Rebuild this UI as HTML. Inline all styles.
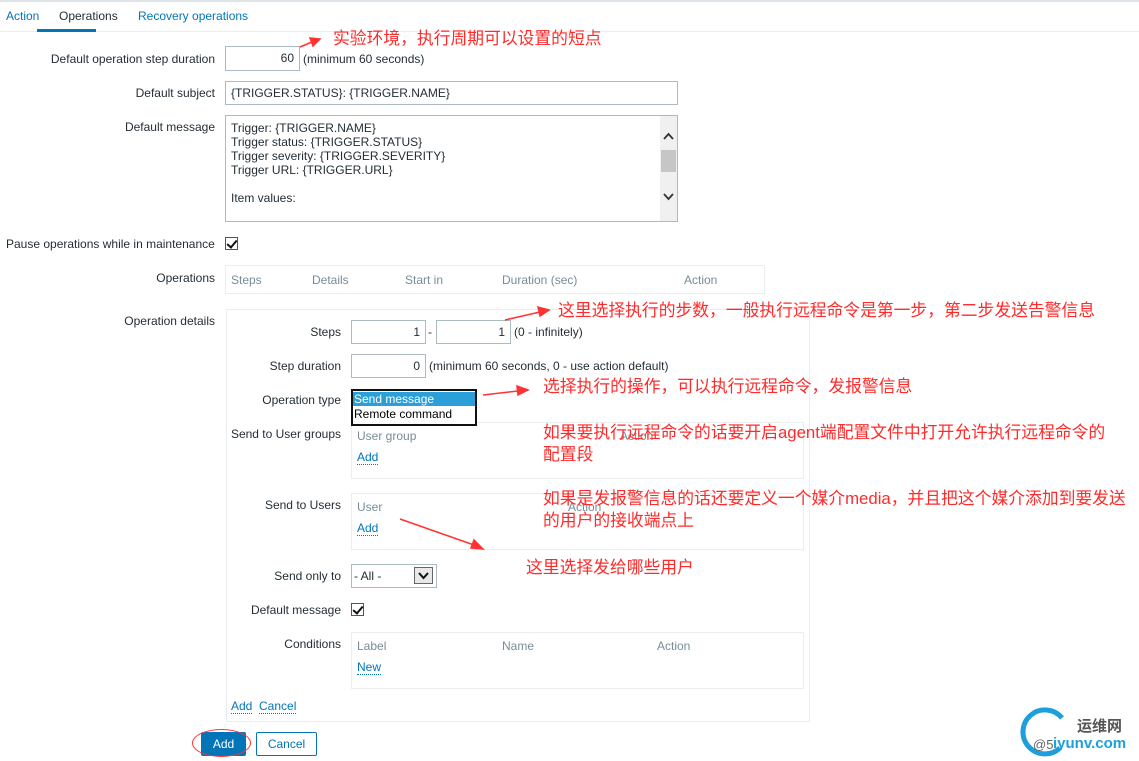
<!DOCTYPE html>
<html><head><meta charset="utf-8"><style>
*{margin:0;padding:0;box-sizing:border-box}
body{width:1139px;height:761px;background:#fff;position:relative;overflow:hidden;font-family:"Liberation Sans",Arial,sans-serif;font-size:12px;color:#1f2c33}
.a{position:absolute;white-space:nowrap}
.l{position:absolute;white-space:nowrap;text-align:right}
.in{position:absolute;border:1px solid #acbbc2;background:#fff;padding:0 5px;line-height:23px}
.box{position:absolute;border:1px solid #ebeef0}
.g{color:#768d99}
.lk{color:#0275b8;border-bottom:1px dotted #0275b8;line-height:13px}
.cn{position:absolute;white-space:nowrap;color:#ff2a2a;font-family:"Liberation Sans","Noto Sans CJK SC",sans-serif;font-size:16.8px;line-height:20px}
.cb{position:absolute;width:13px;height:13px;border:1px solid #555;background:#fff}
.cb:after{content:"";position:absolute;left:3px;top:0px;width:4px;height:8px;border:solid #111;border-width:0 2px 2px 0;transform:rotate(40deg)}
</style></head><body>
<div class="a" style="left:0;top:0;width:1139px;height:2px;background:#dde3e6"></div>
<div class="a" style="left:0;top:31px;width:1139px;height:1px;background:#ebeef0"></div>
<div class="a" style="left:6px;top:9px;color:#0275b8">Action</div>
<div class="a" style="left:59px;top:9px">Operations</div>
<div class="a" style="left:37px;top:29px;width:59px;height:3px;background:#0275b8"></div>
<div class="a" style="left:138px;top:9px;color:#0275b8">Recovery operations</div>

<div class="l" style="right:924px;top:52px">Default operation step duration</div>
<div class="in" style="left:225px;top:46px;width:75px;height:25px;text-align:right">60</div>
<div class="a" style="left:303px;top:52px">(minimum 60 seconds)</div>

<div class="l" style="right:924px;top:86px">Default subject</div>
<div class="in" style="left:225px;top:81px;width:453px;height:24px;line-height:22px">{TRIGGER.STATUS}: {TRIGGER.NAME}</div>

<div class="l" style="right:924px;top:120px">Default message</div>
<div class="in" style="left:225px;top:115px;width:453px;height:107px;line-height:14px;padding-top:5px;overflow:hidden;white-space:nowrap">Trigger: {TRIGGER.NAME}<br>Trigger status: {TRIGGER.STATUS}<br>Trigger severity: {TRIGGER.SEVERITY}<br>Trigger URL: {TRIGGER.URL}<br><br>Item values:<br><br>1. {ITEM.NAME1} ({HOST.NAME1}:{ITEM.KEY1}): {ITEM.VALUE1}
<div style="position:absolute;right:0;top:0;width:17px;height:105px;background:#f0f0f0"></div>
<div style="position:absolute;right:1px;top:34px;width:15px;height:22px;background:#c6c6c6"></div>
<svg style="position:absolute;right:1px;top:16px" width="15" height="70"><path d="M3 7 L7.5 2 L12 7 M3 62 L7.5 67 L12 62" stroke="#333" stroke-width="1.8" fill="none"/></svg>
</div>

<div class="a" style="left:6px;top:237px">Pause operations while in maintenance</div>
<div class="cb" style="left:225px;top:237px"></div>

<div class="l" style="right:924px;top:271px">Operations</div>
<div class="box" style="left:225px;top:265px;width:540px;height:29px"></div>
<div class="a g" style="left:231px;top:273px">Steps</div>
<div class="a g" style="left:312px;top:273px">Details</div>
<div class="a g" style="left:405px;top:273px">Start in</div>
<div class="a g" style="left:502px;top:273px">Duration (sec)</div>
<div class="a g" style="left:684px;top:273px">Action</div>

<div class="l" style="right:924px;top:314px">Operation details</div>
<div class="box" style="left:226px;top:309px;width:584px;height:413px"></div>

<div class="l" style="right:798px;top:325px">Steps</div>
<div class="in" style="left:351px;top:320px;width:75px;height:24px;text-align:right">1</div>
<div class="a" style="left:428px;top:325px">-</div>
<div class="in" style="left:436px;top:320px;width:75px;height:24px;text-align:right">1</div>
<div class="a" style="left:514px;top:325px">(0 - infinitely)</div>

<div class="l" style="right:798px;top:359px">Step duration</div>
<div class="in" style="left:351px;top:354px;width:75px;height:24px;text-align:right">0</div>
<div class="a" style="left:429px;top:359px">(minimum 60 seconds, 0 - use action default)</div>

<div class="l" style="right:798px;top:393px">Operation type</div>

<div class="l" style="right:798px;top:427px">Send to User groups</div>
<div class="box" style="left:351px;top:422px;width:453px;height:57px"></div>
<div class="a g" style="left:357px;top:429px">User group</div>
<div class="a g" style="left:620px;top:429px">Action</div>
<div class="a lk" style="left:357px;top:451px">Add</div>

<div class="a" style="left:351px;top:389px;width:126px;height:37px;border:2px solid #111;background:#fff"></div>
<div class="a" style="left:353px;top:392px;width:122px;height:14px;background:#2a9fd8;color:#fff;line-height:14px;padding-left:1px">Send message</div>
<div class="a" style="left:354px;top:407px;line-height:14px;color:#000">Remote command</div>

<div class="l" style="right:798px;top:498px">Send to Users</div>
<div class="box" style="left:351px;top:493px;width:453px;height:57px"></div>
<div class="a g" style="left:357px;top:500px">User</div>
<div class="a g" style="left:568px;top:500px">Action</div>
<div class="a lk" style="left:357px;top:522px">Add</div>

<div class="l" style="right:798px;top:569px">Send only to</div>
<div class="in" style="left:351px;top:564px;width:86px;height:24px;padding-left:2px">- All -</div>
<div class="a" style="left:414px;top:567px;width:19px;height:17px;border:1px solid #666;background:#e8e8e8"><svg width="17" height="15"><path d="M4 5 L8.5 10 L13 5" stroke="#111" stroke-width="2" fill="none"/></svg></div>

<div class="l" style="right:798px;top:603px">Default message</div>
<div class="cb" style="left:351px;top:603px"></div>

<div class="l" style="right:798px;top:637px">Conditions</div>
<div class="box" style="left:351px;top:632px;width:453px;height:57px"></div>
<div class="a g" style="left:357px;top:639px">Label</div>
<div class="a g" style="left:502px;top:639px">Name</div>
<div class="a g" style="left:657px;top:639px">Action</div>
<div class="a lk" style="left:357px;top:661px">New</div>

<div class="a lk" style="left:231px;top:700px">Add</div>
<div class="a lk" style="left:259px;top:700px">Cancel</div>

<div class="a" style="left:201px;top:732px;width:45px;height:24px;background:#0275b8;color:#fff;text-align:center;line-height:24px;border-radius:2px">Add</div>
<div class="a" style="left:192px;top:729px;width:59px;height:28px;border:1px solid #f33;border-radius:50%"></div>
<div class="a" style="left:256px;top:732px;width:61px;height:24px;border:1px solid #0275b8;color:#0275b8;text-align:center;line-height:22px;border-radius:2px">Cancel</div>

<div class="cn" style="left:333px;top:29px">实验环境，执行周期可以设置的短点</div>
<div class="cn" style="left:558px;top:301px">这里选择执行的步数，一般执行远程命令是第一步，第二步发送告警信息</div>
<div class="cn" style="left:543px;top:377px">选择执行的操作，可以执行远程命令，发报警信息</div>
<div class="cn" style="left:543px;top:423px">如果要执行远程命令的话要开启agent端配置文件中打开允许执行远程命令的</div>
<div class="cn" style="left:543px;top:445px">配置段</div>
<div class="cn" style="left:543px;top:489px">如果是发报警信息的话还要定义一个媒介media，并且把这个媒介添加到要发送</div>
<div class="cn" style="left:543px;top:511px">的用户的接收端点上</div>
<div class="cn" style="left:526px;top:558px">这里选择发给哪些用户</div>

<svg class="a" style="left:0;top:0" width="1139" height="761">
<g stroke="#f33" stroke-width="1.5" fill="#f33">
<line x1="300" y1="47" x2="312" y2="42"/><polygon points="320,39 310,38 313,46"/>
<line x1="505" y1="320" x2="540" y2="312"/><polygon points="549,310 538,307 540,316"/>
<line x1="483" y1="395" x2="518" y2="391"/><polygon points="528,390 517,386 518,395"/>
<line x1="400" y1="519" x2="474" y2="545"/><polygon points="483,549 474,540 471,548"/>
</g>
<path d="M1060 748 A22 22 0 1 1 1062 718" stroke="#1d9fdc" stroke-width="5" fill="none"/>
</svg>
<div class="a" style="left:1077px;top:715px;font-family:'Noto Sans CJK SC',sans-serif;font-size:15px;font-weight:bold;color:#555">运维网</div>
<div class="a" style="left:1053px;top:735px;font-size:15px;font-weight:bold;color:#1d9fdc">iyunv.com</div>
<div class="a" style="left:1033px;top:737px;font-size:13px;color:#666">@5</div>
</body></html>
